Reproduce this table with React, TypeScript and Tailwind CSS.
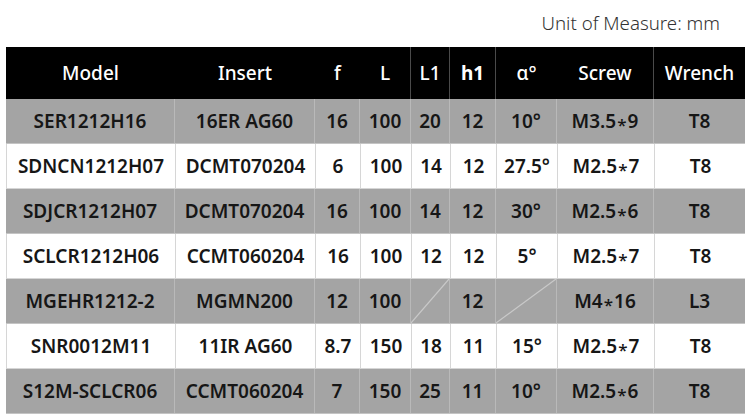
import React from "react";

type Row = {
	model: string;
	insert: string;
	f: string;
	L: string;
	L1: string;
	h1: string;
	alpha: string;
	screw: string;
	wrench: string;
};

const rows: Row[] = [
	{ model: "SER1212H16", insert: "16ER AG60", f: "16", L: "100", L1: "20", h1: "12", alpha: "10°", screw: "M3.5*9", wrench: "T8" },
	{ model: "SDNCN1212H07", insert: "DCMT070204", f: "6", L: "100", L1: "14", h1: "12", alpha: "27.5°", screw: "M2.5*7", wrench: "T8" },
	{ model: "SDJCR1212H07", insert: "DCMT070204", f: "16", L: "100", L1: "14", h1: "12", alpha: "30°", screw: "M2.5*6", wrench: "T8" },
	{ model: "SCLCR1212H06", insert: "CCMT060204", f: "16", L: "100", L1: "12", h1: "12", alpha: "5°", screw: "M2.5*7", wrench: "T8" },
	{ model: "MGEHR1212-2", insert: "MGMN200", f: "12", L: "100", L1: "", h1: "12", alpha: "", screw: "M4*16", wrench: "L3" },
	{ model: "SNR0012M11", insert: "11IR AG60", f: "8.7", L: "150", L1: "18", h1: "11", alpha: "15°", screw: "M2.5*7", wrench: "T8" },
	{ model: "S12M-SCLCR06", insert: "CCMT060204", f: "7", L: "150", L1: "25", h1: "11", alpha: "10°", screw: "M2.5*6", wrench: "T8" },
];

const cols = "grid grid-cols-[169px_140px_45px_51px_39px_46px_61px_97px_91px]";

function Slash() {
	return (
		<svg className="absolute inset-0 h-full w-full" preserveAspectRatio="none" viewBox="0 0 100 100">
			<line x1="0" y1="100" x2="100" y2="0" stroke="#c9c9c9" strokeWidth="1.2" vectorEffect="non-scaling-stroke" />
		</svg>
	);
}

// screw sizes use a small centred star, like M2.5*7
function Screw({ value }: { value: string }) {
	const [a, b] = value.split("*");
	return (
		<span>
			{a}
			<span className="relative top-[3px] px-[1px] text-[17px] font-medium">*</span>
			{b}
		</span>
	);
}

export default function App() {
	return (
		<div
			className="w-[750px] h-[416px] bg-white overflow-hidden"
			style={{ fontFamily: '"Noto Sans", Arial, sans-serif' }}
		>
			<div className="h-[47px] flex justify-end pr-[30px] pt-[10px] text-[18.7px] font-light text-[#333] leading-[26px]">
				Unit of Measure: mm
			</div>

			<div className="ml-[6px] w-[739px]">
				{/* Header */}
				<div className={`${cols} h-[52px] bg-black text-white text-[19px] font-medium`}>
					<div className="flex items-center justify-center">Model</div>
					<div className="flex items-center justify-center">Insert</div>
					<div className="flex items-center justify-center">f</div>
					<div className="flex items-center justify-center border-r border-[#4a4a4a]">L</div>
					<div className="flex items-center justify-center border-r border-[#4a4a4a]">L1</div>
					<div className="flex items-center justify-center border-r border-[#4a4a4a] font-bold">h1</div>
					<div className="flex items-center justify-center">α°</div>
					<div className="flex items-center justify-center border-r border-[#4a4a4a]">Screw</div>
					<div className="flex items-center justify-center">Wrench</div>
				</div>

				{/* Body */}
				{rows.map((r, i) => {
					const gray = i % 2 === 0;
					const line = gray ? "border-[#b9b9b9]" : "border-[#d6d6d6]";
					const cell = `relative flex items-center justify-center border-r ${line}`;
					return (
						<div
							key={r.model}
							className={`${cols} h-[45px] text-[19px] font-semibold text-[#161616] border-b ${
								gray ? "bg-[#a4a4a4] border-[#c4c4c4]" : "bg-white border-l border-[#d6d6d6]"
							}`}
						>
							<div className={cell}>{r.model}</div>
							<div className={cell}>{r.insert}</div>
							<div className={cell}>{r.f}</div>
							<div className={cell}>{r.L}</div>
							<div className={cell}>
								{r.L1 || <Slash />}
							</div>
							<div className={cell}>{r.h1}</div>
							<div className={cell}>
								{r.alpha || <Slash />}
							</div>
							<div className={cell}>
								<Screw value={r.screw} />
							</div>
							<div className="flex items-center justify-center">{r.wrench}</div>
						</div>
					);
				})}
			</div>
		</div>
	);
}
